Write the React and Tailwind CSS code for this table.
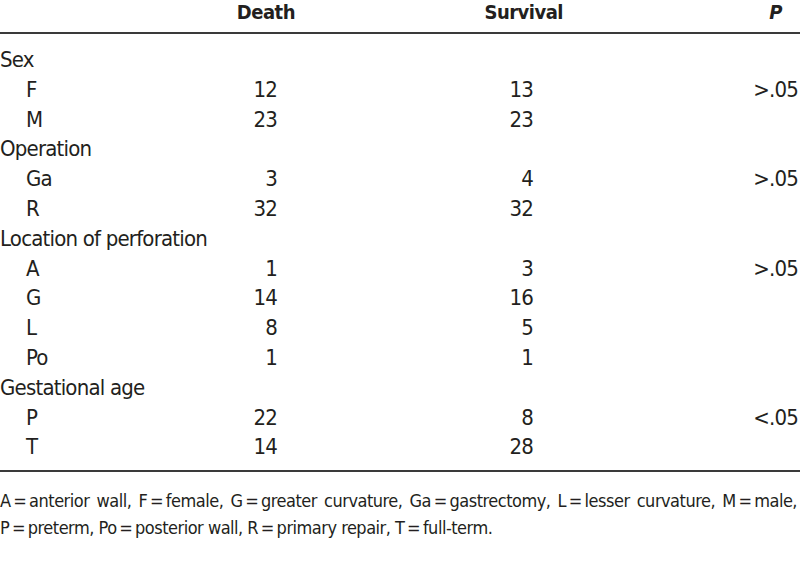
import React from "react";

const groups = [
  {
    title: "Sex",
    rows: [
      { label: "F", death: "12", survival: "13", p: ">.05" },
      { label: "M", death: "23", survival: "23", p: "" },
    ],
  },
  {
    title: "Operation",
    rows: [
      { label: "Ga", death: "3", survival: "4", p: ">.05" },
      { label: "R", death: "32", survival: "32", p: "" },
    ],
  },
  {
    title: "Location of perforation",
    rows: [
      { label: "A", death: "1", survival: "3", p: ">.05" },
      { label: "G", death: "14", survival: "16", p: "" },
      { label: "L", death: "8", survival: "5", p: "" },
      { label: "Po", death: "1", survival: "1", p: "" },
    ],
  },
  {
    title: "Gestational age",
    rows: [
      { label: "P", death: "22", survival: "8", p: "<.05" },
      { label: "T", death: "14", survival: "28", p: "" },
    ],
  },
];

// narrow no-break spaces so "X = term" never splits
const t = "\u202F=\u202F";
const footnote =
  `A${t}anterior wall, F${t}female, G${t}greater curvature, Ga${t}gastrectomy, L${t}lesser curvature, M${t}male, ` +
  `P${t}preterm, Po${t}posterior wall, R${t}primary repair, T${t}full-term.`;

const Row = ({ label, death, survival, p, indent }) => (
  <div className="grid grid-cols-[210px_67px_256px_265px] h-[29.8px] leading-[29.8px]">
    <div className={indent ? "pl-[26px] whitespace-nowrap" : "whitespace-nowrap"}>{label}</div>
    <div className="text-right">{death}</div>
    <div className="text-right">{survival}</div>
    <div className="text-right">{p}</div>
  </div>
);

export default function App() {
  return (
    <div className="w-[800px] h-[570px] bg-white text-[#231f20] font-['DejaVu_Sans_Condensed','Liberation_Sans',sans-serif] overflow-hidden">
      {/* Header */}
      <div className="grid grid-cols-[295px_268px_1fr] h-8 text-[20px] leading-[24px] font-bold tracking-[-0.5px]">
        <div className="text-right">Death</div>
        <div className="text-right">Survival</div>
        <div className="text-right pr-[18px] italic">P</div>
      </div>
      <div className="h-[2px] bg-[#3a3a3a]" />

      {/* Body */}
      <div className="pt-[11px] pb-[8px] text-[22px] tracking-[-0.8px]">
        {groups.map((g) => (
          <div key={g.title}>
            <Row label={g.title} death="" survival="" p="" />
            {g.rows.map((r) => (
              <Row key={g.title + r.label} {...r} indent />
            ))}
          </div>
        ))}
      </div>
      <div className="h-[2px] bg-[#3a3a3a]" />

      {/* Footnote */}
      <p className="pt-[15px] text-[18px] leading-[27px] tracking-[-0.5px] text-justify pr-[3px]">{footnote}</p>
    </div>
  );
}
